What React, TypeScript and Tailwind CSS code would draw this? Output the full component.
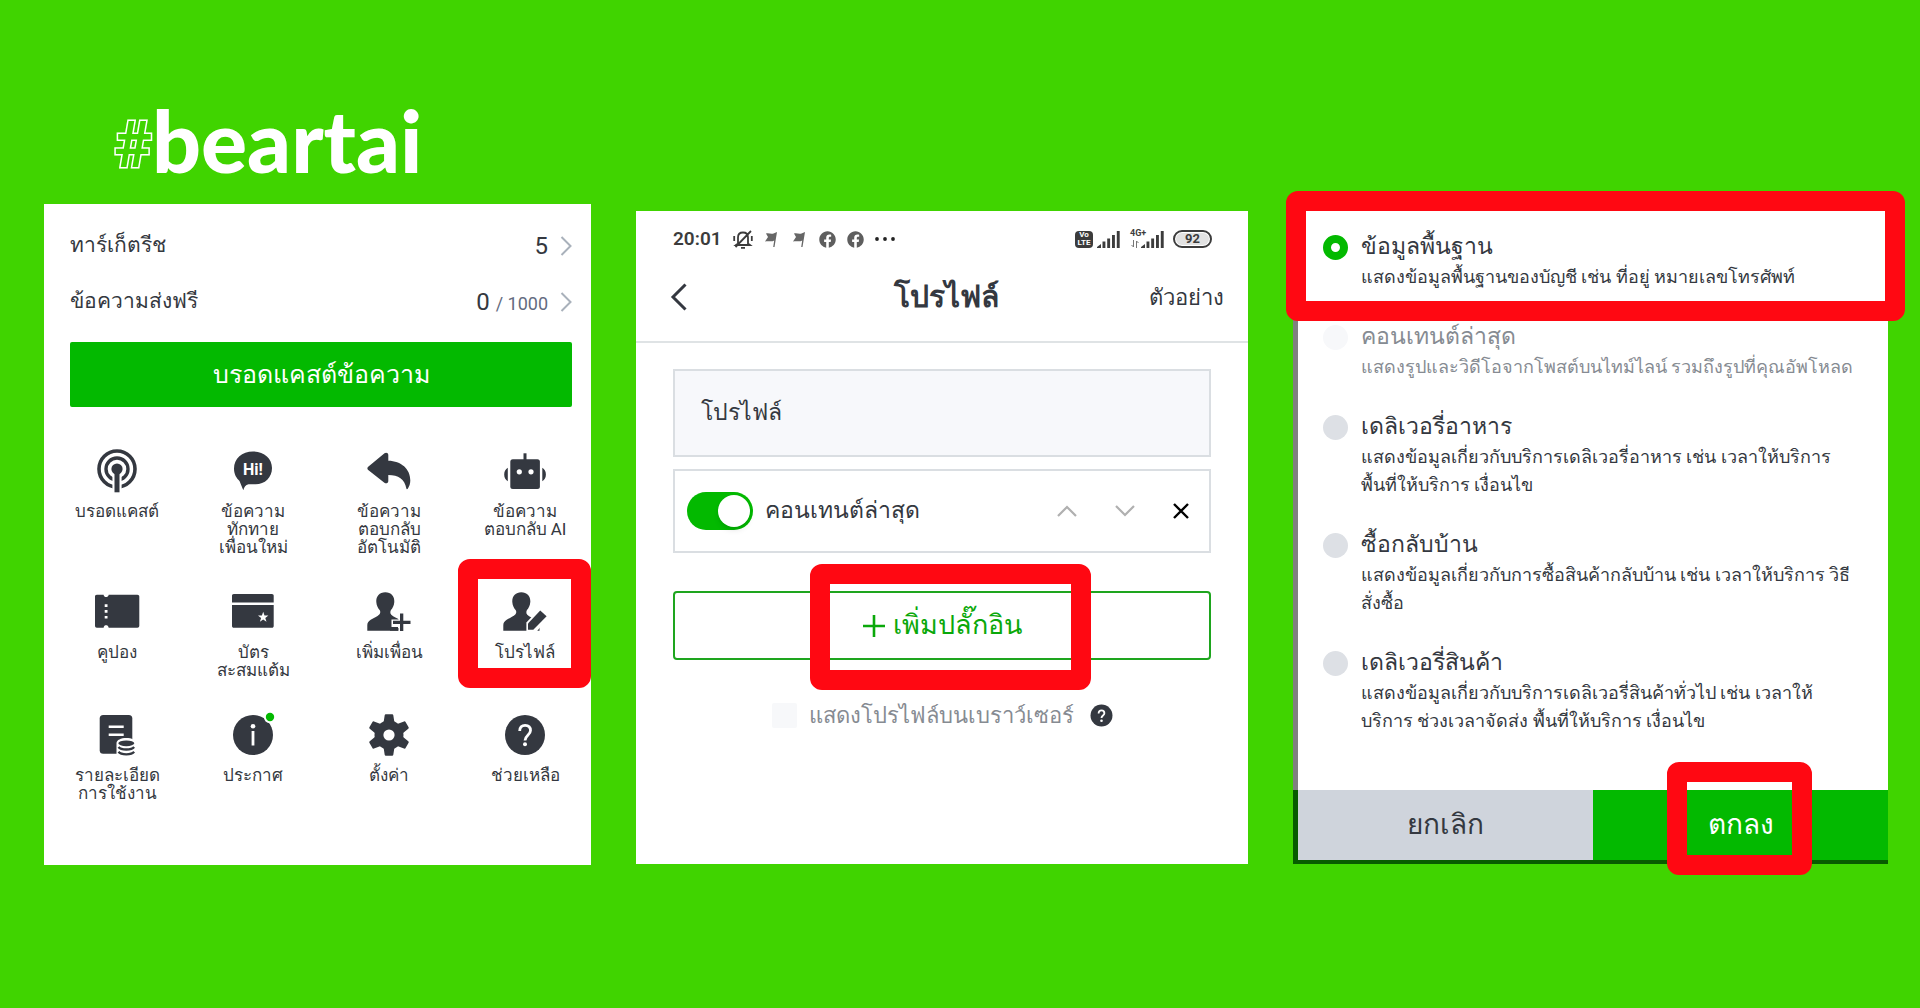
import { useState, type ReactNode } from 'react';
import { FaFacebook } from 'react-icons/fa';

const DARK = '#343840';

interface IMenuItem {
  label: string;
  icon: ReactNode;
  highlighted?: boolean;
}

interface IPluginOption {
  id: string;
  title: string;
  description: string;
  disabled?: boolean;
}

const Icon = ({ children }: { children: ReactNode }) => (
  <svg viewBox="0 0 44 44" className="size-11 overflow-visible" fill={DARK} aria-hidden="true">
    {children}
  </svg>
);

const BroadcastIcon = () => (
  <Icon>
    <circle cx="22" cy="20" r="18" fill="none" stroke={DARK} strokeWidth="3.6" />
    <circle cx="22" cy="20" r="11" fill="none" stroke={DARK} strokeWidth="3.4" />
    <rect x="17.4" y="20" width="9.2" height="24" fill="#fff" />
    <circle cx="22" cy="20" r="5.6" />
    <rect x="19.5" y="20" width="5" height="23.3" />
  </Icon>
);

const HiIcon = () => (
  <Icon>
    <path d="M22 2.5C11 2.5 3 9.500 3 19.500c0 6 2.500 9.500 5.500 12.500l3.800 9.300c.9-3.300 2.200-5.600 5.200-6h7C34 35.300 41 28.500 41 19 41 9.500 33 2.500 22 2.500z" />
    <text x="22" y="25.500" textAnchor="middle" fontSize="16" fontWeight="700" fill="#fff">Hi!</text>
  </Icon>
);

const ReplyIcon = () => (
  <Icon>
    <path d="M1.200 17.800 17.500 4.300c1.700-1.200 3.800-.3 3.800 1.700v5.700C34 11.800 43.500 20 43.300 31.500c0 3.300-1 5.800-2.500 8.200-.7.800-1.300.6-1.500-.4C37.500 30 31.500 26 21.300 26v6c0 2.200-2.200 3-3.900 1.700L1.200 21c-1.100-1-1.100-2.200 0-3.200z" />
  </Icon>
);

const RobotIcon = () => (
  <Icon>
    <rect x="20.500" y="4.300" width="3" height="8" />
    <rect x="7.300" y="10.300" width="29.600" height="29.700" rx="2.500" />
    <path d="M4.800 18.800v13.400C2.500 31 1.200 28.500 1.200 25.500s1.300-5.500 3.600-6.700zM39.300 18.800v13.400c2.300-1.200 3.600-3.700 3.600-6.700s-1.300-5.500-3.600-6.700z" />
    <circle cx="16.300" cy="22.800" r="2.600" fill="#fff" />
    <circle cx="28" cy="22.800" r="2.600" fill="#fff" />
  </Icon>
);

const CouponIcon = () => (
  <Icon>
    <path d="M1.800 4.700h6.800c.4 1.800 1.200 2.400 2.500 2.400s2.100-.6 2.600-2.400h28.700c1.100 0 1.900.7 1.900 1.900v29.200c0 1.200-.8 1.900-1.900 1.900H13.700c-.5-1.800-1.300-2.400-2.600-2.400s-2.100.6-2.500 2.400H1.800C.7 37.700 0 37 0 35.800V6.600c0-1.200.7-1.900 1.800-1.900z" />
    <path fill="#fff" d="M9.700 14.300h2.800v2.600H9.700zM9.700 20.100h2.800v2.600H9.700zM9.700 25.900h2.800v2.600H9.700z" />
  </Icon>
);

const CardIcon = () => (
  <Icon>
    <path d="M2.800 4h38.100c1.100 0 1.800.7 1.800 1.800v6.700H1V5.800C1 4.700 1.700 4 2.800 4zM1 15h41.700v20.900c0 1.100-.7 1.800-1.800 1.800H2.800c-1.100 0-1.800-.7-1.800-1.800z" />
    <path fill="#fff" d="m32.200 21.800 1.300 3.700h3.900l-3.100 2.400 1.200 3.800-3.300-2.300-3.300 2.300 1.200-3.800-3.100-2.400h3.900z" />
  </Icon>
);

const PERSON = 'M18.300 2.200c5.800 0 9.400 4 9 9.800-.2 3.400-1.700 6-3.300 8-.9 1.200-.9 3.600.3 4.800 2 2 6 3.600 9 5.400 2.300 1.500 3.200 3 3.200 5.500v5H.3v-5.500c0-2.500 1-4 3.400-5.500 3-1.700 6.600-3.200 8.600-5.200 1.200-1.200 1.300-3.300.3-4.500-1.700-2-3.100-4.600-3.300-8-.4-5.800 3.200-9.800 9-9.800z';

const AddFriendIcon = () => (
  <Icon>
    <path d={PERSON} />
    <path fill="#fff" d="M31.500 21h14v24h-14v-7h-7v-8.500h7z" />
    <path d="M33 23.500h3.300v7.200h7.200V34h-7.200v7H33v-7h-7v-3.300h7z" />
    <path d="M23 37h8v3.700h-8z" />
  </Icon>
);

const ProfileIcon = () => (
  <Icon>
    <path d={PERSON} />
    <path fill="#fff" d="m38 17 9 8-14 17.500H23.400V32.500z" />
    <path d="m37.200 20.500 6.400 5.700-13.300 13.600H25v-6.200z" />
  </Icon>
);

const UsageIcon = () => (
  <Icon>
    <rect x="4.700" y="2" width="32.600" height="38.700" rx="3.500" />
    <path stroke="#fff" strokeWidth="2.400" d="M13.700 13.700h15M13.700 21.700h15" />
    <path fill="#fff" d="M21.500 30c0-3 4.500-5 9.800-5s9.800 2 9.800 5v14H21.500z" />
    <ellipse cx="31.300" cy="30.300" rx="8" ry="2.900" />
    <path fill="none" stroke={DARK} strokeWidth="2.300" d="M23.500 34c2.500 3.300 13.100 3.300 15.600 0M23.500 38.800c2.500 3.300 13.100 3.300 15.600 0" />
  </Icon>
);

const NoticeIcon = () => (
  <Icon>
    <circle cx="22" cy="22" r="20" />
    <circle cx="22" cy="13.300" r="2.300" fill="#fff" />
    <rect x="20.600" y="18" width="2.800" height="14.500" fill="#fff" />
    <circle cx="39" cy="4" r="6.200" fill="#fff" />
    <circle cx="39" cy="4" r="4.200" fill="#03b900" />
  </Icon>
);

const GearIcon = () => (
  <Icon>
    <circle cx="22" cy="22" r="14.500" />
    {[0, 60, 120, 180, 240, 300].map((deg) => (
      <path key={deg} d="M18.800 1.200h6.400c.6 0 1 .4 1.100 1L27.500 10h-11l1.200-7.800c.1-.6.500-1 1.100-1z" transform={`rotate(${deg} 22 22)`} />
    ))}
    <circle cx="22" cy="22" r="5.600" fill="#fff" />
  </Icon>
);

const HelpIcon = () => (
  <Icon>
    <circle cx="22" cy="22" r="20" />
    <path fill="none" stroke="#fff" strokeWidth="2.800" d="M16.700 18c0-3.700 2.100-5.700 5.400-5.700s5.400 2 5.400 5.200c0 4.700-5.500 4.800-5.500 10" />
    <circle cx="22" cy="31.300" r="2" fill="#fff" />
  </Icon>
);

const MENU: IMenuItem[] = [
  { label: 'บรอดแคสต์', icon: <BroadcastIcon /> },
  { label: 'ข้อความ\nทักทาย\nเพื่อนใหม่', icon: <HiIcon /> },
  { label: 'ข้อความ\nตอบกลับ\nอัตโนมัติ', icon: <ReplyIcon /> },
  { label: 'ข้อความ\nตอบกลับ AI', icon: <RobotIcon /> },
  { label: 'คูปอง', icon: <CouponIcon /> },
  { label: 'บัตร\nสะสมแต้ม', icon: <CardIcon /> },
  { label: 'เพิ่มเพื่อน', icon: <AddFriendIcon /> },
  { label: 'โปรไฟล์', icon: <ProfileIcon />, highlighted: true },
  { label: 'รายละเอียด\nการใช้งาน', icon: <UsageIcon /> },
  { label: 'ประกาศ', icon: <NoticeIcon /> },
  { label: 'ตั้งค่า', icon: <GearIcon /> },
  { label: 'ช่วยเหลือ', icon: <HelpIcon /> },
];

const OPTIONS: IPluginOption[] = [
  { id: 'basic', title: 'ข้อมูลพื้นฐาน', description: 'แสดงข้อมูลพื้นฐานของบัญชี เช่น ที่อยู่ หมายเลขโทรศัพท์' },
  { id: 'recent', title: 'คอนเทนต์ล่าสุด', description: 'แสดงรูปและวิดีโอจากโพสต์บนไทม์ไลน์ รวมถึงรูปที่คุณอัพโหลด', disabled: true },
  { id: 'food', title: 'เดลิเวอรี่อาหาร', description: 'แสดงข้อมูลเกี่ยวกับบริการเดลิเวอรี่อาหาร เช่น เวลาให้บริการ\nพื้นที่ให้บริการ เงื่อนไข' },
  { id: 'takeout', title: 'ซื้อกลับบ้าน', description: 'แสดงข้อมูลเกี่ยวกับการซื้อสินค้ากลับบ้าน เช่น เวลาให้บริการ วิธี\nสั่งซื้อ' },
  { id: 'goods', title: 'เดลิเวอรี่สินค้า', description: 'แสดงข้อมูลเกี่ยวกับบริการเดลิเวอรี่สินค้าทั่วไป เช่น เวลาให้\nบริการ ช่วงเวลาจัดส่ง พื้นที่ให้บริการ เงื่อนไข' },
];

// Red marker frame laid over the control that has to be tapped
const Marker = ({ className }: { className: string }) => (
  <div className={`pointer-events-none absolute z-10 rounded-xl border-[20px] border-[#ff0812] ${className}`} />
);

const ChevronRight = () => (
  <svg viewBox="0 0 12 20" className="h-5 w-3" fill="none" stroke="#a9b1bb" strokeWidth="2" aria-hidden="true">
    <path d="m1.500 1 9 9-9 9" />
  </svg>
);

const SignalBars = () => (
  <svg viewBox="0 0 23 17" className="h-[17px] w-[23px]" fill="#3c3c3c" aria-hidden="true">
    <path d="M0 17v-1l4-3v4zM5.500 10.500h2.900V17H5.500zM10.200 7.500h2.900V17h-2.900zM15 4h2.900v13H15zM19.800 0h2.900v17h-2.900z" />
  </svg>
);

const FlagIcon = () => (
  <svg viewBox="0 0 12 16" className="h-4 w-3" fill="#666" aria-hidden="true">
    <path d="M1 2.500c3-.8 5 1 7.500 0L12 1 9.500 16H8.200l1-6.500c-2.500 1.500-5.200.2-9.200 1L3 6z" />
  </svg>
);

const StatusBar = () => (
  <div className="flex h-5 items-center justify-between text-[#3c3c3c]">
    <div className="flex items-center">
      <span className="w-[60px] text-[19px] leading-5 font-semibold">20:01</span>
      <svg viewBox="0 0 20 20" className="size-5" fill="none" stroke="#3c3c3c" strokeWidth="1.800" aria-hidden="true">
        <path d="M5 14.500V8.500c0-3 2-5 5-5s5 2 5 5v6l2 1.500H3zM18 2 2.500 18M8 18.800h4M1.200 7v5M18.800 7v5" />
      </svg>
      <div className="ml-3 flex items-center gap-4">
        <FlagIcon />
        <FlagIcon />
      </div>
      <div className="ml-[14px] flex items-center gap-[11px] text-[17px] text-[#5e5e5e]">
        <FaFacebook />
        <FaFacebook />
      </div>
      <svg viewBox="0 0 20 4" className="ml-[11px] h-1 w-5" fill="#222" aria-hidden="true">
        <circle cx="2" cy="2" r="1.900" />
        <circle cx="10" cy="2" r="1.900" />
        <circle cx="18" cy="2" r="1.900" />
      </svg>
    </div>
    <div className="flex items-center">
      <div className="mr-1 h-[17px] w-[18px] rounded-sm bg-[#3c3c3c] text-center text-[8px] leading-2 font-bold text-white">
        Vo
        <br />
        LTE
      </div>
      <SignalBars />
      <div className="relative ml-[21px]">
        <SignalBars />
        <span className="absolute -top-1 -left-[11px] text-[9px] leading-3 font-bold">4G+</span>
        <svg viewBox="0 0 8 8" className="absolute bottom-0 -left-[10px] size-2" fill="none" stroke="#777" aria-hidden="true">
          <path d="M2.500 0v7L.5 5M5.500 8V1l2 2" />
        </svg>
      </div>
      <div className="ml-[9px] rounded-full border-2 border-[#3c3c3c] p-px">
        <div className="h-3 w-[33px] rounded-full bg-[#e2e2e2] text-center text-[13px] leading-3 font-bold">92</div>
      </div>
    </div>
  </div>
);

const Logo = () => (
  <div className="ml-[70px] flex h-[100px] items-center pb-7 text-white">
    <span className="pt-3 text-[64px] leading-none font-bold text-[#40d400] [-webkit-text-stroke:3px_white] [paint-order:stroke]">#</span>
    <span className="font-[Lato] text-[86px] leading-none font-black">beartai</span>
  </div>
);

const HomePanel = () => (
  <section className="bg-white pt-[14px] pr-[19px] pb-[63px] pl-[26px]">
    <a href="#reach" className="flex h-14 items-center justify-between">
      <span className="text-[21px]">ทาร์เก็ตรีช</span>
      <span className="flex items-center gap-3">
        <span className="text-2xl">5</span>
        <ChevronRight />
      </span>
    </a>
    <a href="#free" className="flex h-14 items-center justify-between">
      <span className="text-[21px]">ข้อความส่งฟรี</span>
      <span className="flex items-center gap-3">
        <span className="text-2xl">
          0 <span className="text-lg text-[#636b80]">/ 1000</span>
        </span>
        <ChevronRight />
      </span>
    </a>
    <button className="mt-3 h-[65px] w-full rounded-xs bg-[#03b900] text-[25px] text-white">บรอดแคสต์ข้อความ</button>

    <nav className="mt-[42px] -mr-[21px] -ml-[21px] grid grid-cols-4 gap-y-[34px]">
      {MENU.map((item) => (
        <button key={item.label} className="relative flex flex-col items-center gap-[9px]">
          {item.icon}
          <span className="text-[17px] leading-[18px] whitespace-pre-line">{item.label}</span>
          {item.highlighted && <Marker className="-top-[31px] right-[2px] h-[129px] w-[133px]" />}
        </button>
      ))}
    </nav>
  </section>
);

const ProfilePanel = () => {
  const [enabled, setEnabled] = useState(true);

  return (
    <section className="mt-[7px] bg-white pb-[131px]">
      <div className="pt-[18px] pr-9 pl-[37px]">
        <StatusBar />
      </div>
      <header className="grid h-[94px] grid-cols-3 items-center border-b-2 border-[#dfe3e5] pt-1 pr-6 pl-[34px]">
        <button aria-label="ย้อนกลับ" className="justify-self-start">
          <svg viewBox="0 0 17 28" className="h-7 w-[17px]" fill="none" stroke={DARK} strokeWidth="3">
            <path d="M15.500 1.500 3 14l12.500 12.500" />
          </svg>
        </button>
        <h1 className="justify-self-center text-3xl font-bold">โปรไฟล์</h1>
        <a href="#preview" className="justify-self-end text-[22px]">ตัวอย่าง</a>
      </header>

      <div className="px-[37px] pt-[26px]">
        <div className="flex h-[88px] items-center border-2 border-[#dadee2] bg-[#f7f8fb] px-[26px] text-[23px]">โปรไฟล์</div>

        <div className="mt-3 flex h-[84px] items-center border-2 border-[#dadee2] pr-5 pl-3">
          <label className="flex items-center gap-3 text-[23px]">
            <input
              type="checkbox"
              role="switch"
              checked={enabled}
              onChange={(e) => setEnabled(e.target.checked)}
              className="h-[38px] w-[66px] shrink-0 appearance-none rounded-full bg-gray-300 p-[3px] before:block before:size-8 before:rounded-full before:bg-white before:shadow-md checked:bg-[#03b900] checked:before:translate-x-7"
            />
            คอนเทนต์ล่าสุด
          </label>
          <div className="ml-auto flex items-center gap-[38px]">
            <button aria-label="เลื่อนขึ้น">
              <svg viewBox="0 0 20 12" className="h-3 w-5" fill="none" stroke="#b0b0b0" strokeWidth="2.200">
                <path d="m1 11 9-9 9 9" />
              </svg>
            </button>
            <button aria-label="เลื่อนลง">
              <svg viewBox="0 0 20 12" className="h-3 w-5" fill="none" stroke="#b0b0b0" strokeWidth="2.200">
                <path d="m1 1 9 9 9-9" />
              </svg>
            </button>
            <button aria-label="ลบ">
              <svg viewBox="0 0 16 16" className="size-4" fill="none" stroke="#000" strokeWidth="2.400">
                <path d="m1 1 14 14M15 1 1 15" />
              </svg>
            </button>
          </div>
        </div>

        <div className="relative mt-[38px]">
          <button className="flex h-[69px] w-full items-center justify-center gap-2 rounded-sm border-2 border-[#1ea51e] text-[27px] text-[#0aa80a]">
            <svg viewBox="0 0 22 22" className="size-[22px]" stroke="#0aa80a" strokeWidth="2.600" aria-hidden="true">
              <path d="M11 0v22M0 11h22" />
            </svg>
            เพิ่มปลั๊กอิน
          </button>
          <Marker className="-top-[27px] left-[137px] right-[120px] h-[126px]" />
        </div>

        <div className="mt-[37px] flex h-9 items-center justify-center">
          <label className="flex items-center gap-3 text-[22px] text-[#868b92]">
            <input type="checkbox" disabled className="size-[25px] appearance-none rounded-xs bg-[#f7f8fa]" />
            แสดงโปรไฟล์บนเบราว์เซอร์
          </label>
          <svg viewBox="0 0 44 44" className="ml-4 size-[23px]" aria-label="ช่วยเหลือ">
            <circle cx="22" cy="22" r="21" fill={DARK} />
            <path fill="none" stroke="#fff" strokeWidth="3.500" d="M16.500 18c0-3.700 2.100-5.700 5.500-5.700s5.500 2 5.500 5.200c0 4.700-5.500 4.500-5.500 9.500" />
            <circle cx="22" cy="32" r="2.500" fill="#fff" />
          </svg>
        </div>
      </div>
    </section>
  );
};

const PluginPanel = () => {
  const [selected, setSelected] = useState('basic');

  return (
    <section className="relative mt-[7px]">
      <div className="border-l-[5px] border-[#808080] bg-white pt-5 pr-4 pb-[55px] pl-[25px]">
        <div className="flex flex-col gap-[30px]">
          {OPTIONS.map((option) => (
            <label
              key={option.id}
              className={`flex gap-[13px] ${option.disabled ? 'text-[#868b92]' : ''}`}
            >
              <input
                type="radio"
                name="plugin"
                disabled={option.disabled}
                checked={selected === option.id}
                onChange={() => setSelected(option.id)}
                className="mt-1 size-[25px] shrink-0 appearance-none rounded-full bg-[#dde0e5] checked:border-8 checked:border-[#03b900] checked:bg-white disabled:bg-[#f7f8fa]"
              />
              <span className="min-w-0">
                <span className="block text-[23px] leading-8">{option.title}</span>
                <span className="block text-lg leading-7 whitespace-pre">{option.description}</span>
              </span>
            </label>
          ))}
        </div>
      </div>
      <div className="relative grid grid-cols-2 border-b-4 border-l-[5px] border-[#075c00]">
        <button className="h-[70px] bg-[#cfd4dc] text-[28px]">ยกเลิก</button>
        <button className="h-[70px] bg-[#03b900] text-[28px] text-white">ตกลง</button>
        <Marker className="-top-7 right-[76px] h-[113px] w-[145px]" />
      </div>
      <Marker className="-top-5 -right-[17px] -left-[7px] h-[130px]" />
    </section>
  );
};

export default function App() {
  return (
    <main
      lang="th"
      className="grid min-h-screen grid-cols-[minmax(0,547fr)_minmax(0,612fr)_minmax(0,595fr)] items-start gap-[45px] bg-[#40d400] pt-[104px] pr-8 pl-11 font-['Roboto','Noto_Sans',sans-serif] text-[#343840]"
    >
      <div>
        <Logo />
        <HomePanel />
      </div>
      <div className="pt-[100px]">
        <ProfilePanel />
      </div>
      <div className="pt-[100px]">
        <PluginPanel />
      </div>
    </main>
  );
}
